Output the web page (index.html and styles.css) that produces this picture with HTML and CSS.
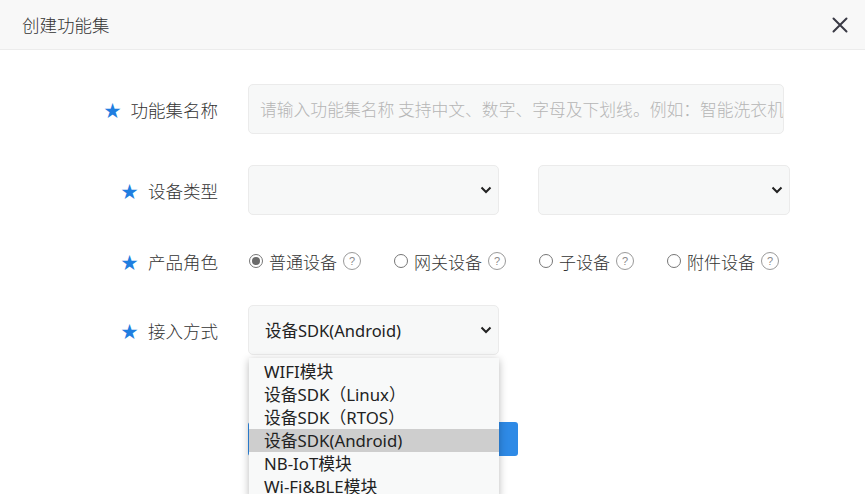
FILE: index.html
```html
<!DOCTYPE html>
<html lang="zh-CN">
<head>
<meta charset="utf-8">
<title>创建功能集</title>
<link rel="stylesheet" href="styles.css">
</head>
<body>
<div class="dialog">
  <div class="header">
    <div class="title">创建功能集</div>
    <svg class="close" width="16" height="16" viewBox="0 0 16 16"><path d="M1.5 1.5 L14.5 14.5 M14.5 1.5 L1.5 14.5" stroke="#3a3a45" stroke-width="2" fill="none" stroke-linecap="round"/></svg>
  </div>
  <div class="form">
    <div class="row r-name">
      <div class="label"><span class="star">★</span>功能集名称</div>
      <div class="field"><div class="input placeholder">请输入功能集名称 支持中文、数字、字母及下划线。例如：智能洗衣机</div></div>
    </div>
    <div class="row r-type">
      <div class="label"><span class="star">★</span>设备类型</div>
      <div class="field pair">
        <div class="select s1"><span></span><svg class="chev" width="12" height="8" viewBox="0 0 12 8"><path d="M1.5 1.5 L6 6 L10.5 1.5" stroke="#222" stroke-width="2" fill="none"/></svg></div>
        <div class="select s2"><span></span><svg class="chev" width="12" height="8" viewBox="0 0 12 8"><path d="M1.5 1.5 L6 6 L10.5 1.5" stroke="#222" stroke-width="2" fill="none"/></svg></div>
      </div>
    </div>
    <div class="row r-role">
      <div class="label"><span class="star">★</span>产品角色</div>
      <div class="field radios">
        <div class="radio checked"><span class="dot"></span>普通设备<span class="help">?</span></div>
        <div class="radio"><span class="dot"></span>网关设备<span class="help">?</span></div>
        <div class="radio"><span class="dot"></span>子设备<span class="help">?</span></div>
        <div class="radio"><span class="dot"></span>附件设备<span class="help">?</span></div>
      </div>
    </div>
    <div class="row r-access">
      <div class="label"><span class="star">★</span>接入方式</div>
      <div class="field">
        <div class="select s1 open"><span class="value">设备SDK(Android)</span><svg class="chev" width="12" height="8" viewBox="0 0 12 8"><path d="M1.5 1.5 L6 6 L10.5 1.5" stroke="#222" stroke-width="2" fill="none"/></svg>
          <ul class="menu">
            <li>WIFI模块</li>
            <li>设备SDK（Linux）</li>
            <li>设备SDK（RTOS）</li>
            <li class="active">设备SDK(Android)</li>
            <li>NB-IoT模块</li>
            <li>Wi-Fi&amp;BLE模块</li>
          </ul>
        </div>
      </div>
    </div>
    <div class="row r-submit">
      <div class="label"></div>
      <div class="field"><button class="btn" aria-label="确定"></button></div>
    </div>
  </div>
</div>
</body>
</html>
```
FILE: styles.css
```css
html, body {
  margin: 0;
  padding: 0;
  background: #fff;
}
body {
  font-family: "Noto Sans", "Noto Sans CJK SC", sans-serif;
  color: #333;
  overflow: hidden;
  height: 494px;
}
.header {
  height: 50px;
  box-sizing: border-box;
  background: #f8f8f8;
  border-bottom: 1px solid #ececec;
  display: flex;
  align-items: center;
  justify-content: space-between;
  padding: 0 17px 0 22px;
}
.title {
  font-size: 17.5px;
  color: #333;
  font-weight: 300;
  font-family: "Noto Sans CJK SC", sans-serif;
}
.close {
  display: block;
}
.form {
  padding-top: 34px;
  display: flex;
  flex-direction: column;
}
.row {
  display: flex;
  align-items: center;
}
.label {
  width: 218px;
  flex: none;
  text-align: right;
  font-size: 17.5px;
  font-weight: 300;
  font-family: "Noto Sans CJK SC", sans-serif;
  color: #333;
  margin-right: 30px;
}
.star {
  color: #1f7ee0;
  font-size: 17px;
  margin-right: 10px;
  font-family: "DejaVu Sans", sans-serif;
}
.r-name { height: 50px; }
.r-type { height: 50px; margin-top: 31px; }
.r-role { height: 30px; margin-top: 31px; }
.r-access { height: 50px; margin-top: 29px; }
.r-submit { height: 34px; margin-top: 69px; }
.input {
  width: 536px;
  height: 50px;
  box-sizing: border-box;
  border: 1px solid #ebebeb;
  border-radius: 5px;
  background: #f7f8f8;
  display: flex;
  align-items: center;
  padding-left: 11px;
  font-size: 16.8px;
  font-weight: 300;
  white-space: nowrap;
  overflow: hidden;
  font-family: "Noto Sans CJK SC", sans-serif;
}
.placeholder { color: #b5b5b5; }
.pair {
  display: flex;
  gap: 39px;
}
.select {
  position: relative;
  width: 251px;
  height: 50px;
  box-sizing: border-box;
  border: 1px solid #ebebeb;
  border-radius: 5px;
  background: #f7f8f8;
  display: flex;
  align-items: center;
  justify-content: space-between;
  padding: 0 6px 0 16px;
}
.s2 { width: 252px; }
.value {
  font-size: 16.5px;
  color: #222;
  font-family: "Noto Sans", "Noto Sans CJK SC", sans-serif;
}
.chev { display: block; }
.radios {
  display: flex;
  align-items: center;
  font-size: 17px;
  font-weight: 300;
  font-family: "Noto Sans CJK SC", sans-serif;
  color: #333;
}
.radio {
  display: flex;
  align-items: center;
  margin-right: 32px;
}
.dot {
  width: 14px;
  height: 14px;
  box-sizing: border-box;
  border: 1px solid #767676;
  border-radius: 50%;
  margin: 0 6px 0 1px;
  position: relative;
  background: #fff;
}
.checked .dot::after {
  content: "";
  position: absolute;
  left: 2px;
  top: 2px;
  width: 8px;
  height: 8px;
  border-radius: 50%;
  background: #6b6b6b;
}
.help {
  width: 18px;
  height: 18px;
  box-sizing: border-box;
  border: 1px solid #9a9a9a;
  border-radius: 50%;
  font-size: 11px;
  color: #8a8a8a;
  display: flex;
  align-items: center;
  justify-content: center;
  margin-left: 6px;
  font-weight: 400;
  font-family: "Liberation Sans", sans-serif;
  line-height: 1;
}
.menu {
  position: absolute;
  left: 0;
  top: 52px;
  width: 250px;
  margin: 0;
  padding: 2px 0 0;
  list-style: none;
  background: #f8f9f9;
  box-shadow: 0 2px 8px rgba(0,0,0,0.28);
  z-index: 5;
}
.menu li {
  height: 23px;
  line-height: 23px;
  padding-left: 15px;
  font-size: 16.8px;
  color: #222;
  font-family: "Noto Sans", "Noto Sans CJK SC", sans-serif;
  white-space: nowrap;
}
.menu li.active {
  background: #cecece;
}
.btn {
  width: 270px;
  height: 34px;
  border: none;
  border-radius: 3px;
  background: #2e8ae6;
  color: #fff;
  font-size: 16px;
}
```
